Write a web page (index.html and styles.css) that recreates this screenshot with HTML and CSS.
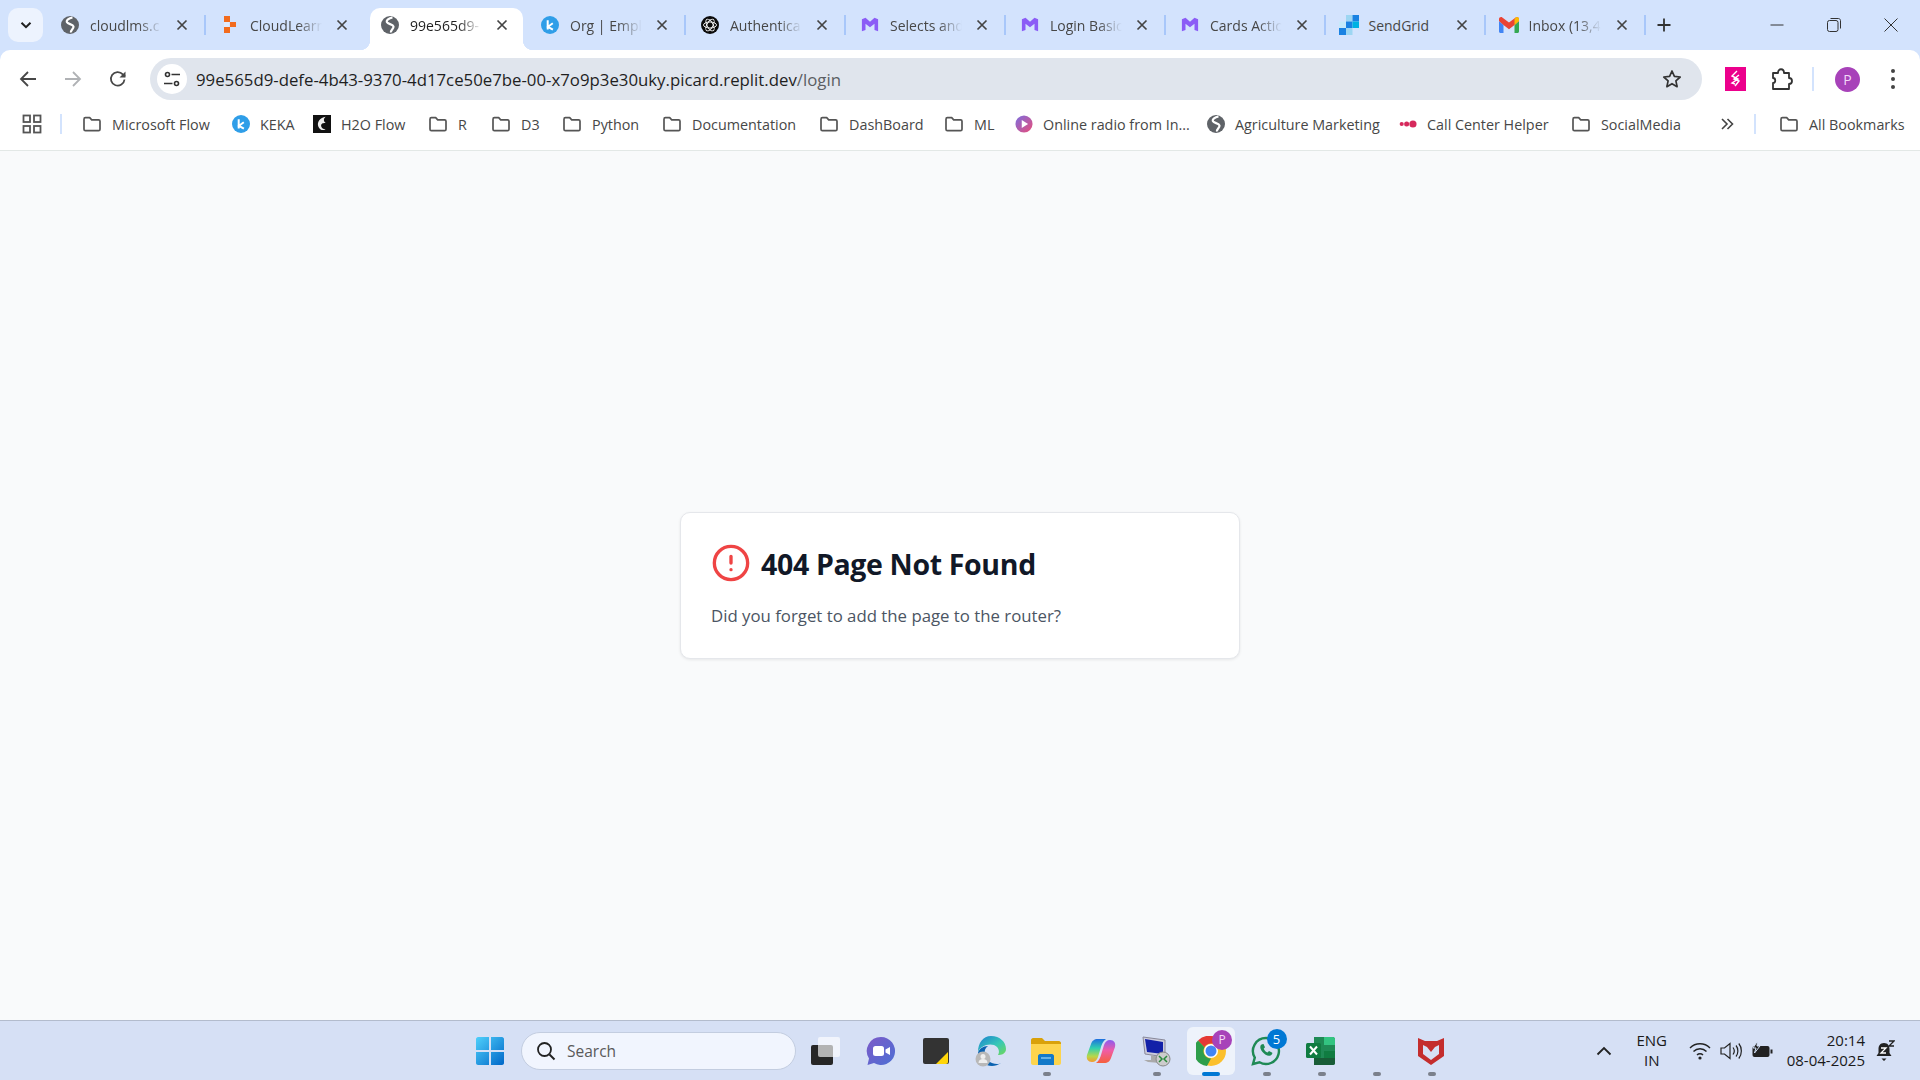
FILE: index.html
```html
<!DOCTYPE html>
<html lang="en">
<head>
  <meta charset="UTF-8">
  <title>404 Page Not Found</title>
  <link rel="stylesheet" href="styles.css">
</head>
<body>

<svg class="sprites" width="0" height="0">
  <symbol id="globe" viewBox="0 0 18 18">
    <circle cx="9" cy="9" r="9" fill="#5f6368"/>
    <path d="M11.500 1.500C8 2.200 5 4 6 6.300c1 2 6 1.700 6.500 4.200.4 2.300-3 3.300-2.500 6" fill="none" stroke="#fff" stroke-width="2.200"/>
  </symbol>
  <symbol id="folder" viewBox="0 0 20 20">
    <path d="M2 5.200c0-.9.6-1.500 1.400-1.500h4.300l2 2.100h6.900c.8 0 1.400.6 1.400 1.400v8c0 .8-.6 1.400-1.400 1.400H3.400c-.8 0-1.400-.6-1.400-1.400z" fill="none" stroke="#555" stroke-width="1.700" stroke-linejoin="round"/>
  </symbol>
  <symbol id="keka" viewBox="0 0 18 18">
    <circle cx="9" cy="9" r="9" fill="#2f9ee8"/>
    <path d="M6.700 4.200v9.300M11.800 7.200 6.900 10.800l5 2.800" fill="none" stroke="#fff" stroke-width="2"/>
  </symbol>
  <symbol id="mui" viewBox="0 0 20 18">
    <path d="M1 2.500 5 1l5 4.500L15 1l4 1.500V16l-4-1.500V7.500l-5 4-5-4v7L1 16z" fill="#8b5cf6"/>
  </symbol>
  <symbol id="close" viewBox="0 0 12 12">
    <path d="M1.500 1.500l9 9M10.500 1.500l-9 9" fill="none" stroke="#444" stroke-width="1.700"/>
  </symbol>
</svg>

<header class="browser">
  <div class="tabstrip">
    <div class="tab-search">
      <svg width="14" height="14" viewBox="0 0 14 14"><path d="M2.500 4.700 7 9.200l4.500-4.500" fill="none" stroke="#1f1f1f" stroke-width="2"/></svg>
    </div>
    <div class="tab">
      <svg class="favicon"><use href="#globe"/></svg>
      <span class="tab-title">cloudlms.c</span>
      <svg class="tab-close"><use href="#close"/></svg>
    </div>
    <i class="tab-sep"></i>
    <div class="tab">
      <svg class="favicon" viewBox="0 0 18 18"><path d="M3 0h6v6H3zM9 6h6v5H9zM3 11h6v6H3z" fill="#f26b1d"/><path d="M3 6h5v5H3z" fill="#fff" opacity=".3"/></svg>
      <span class="tab-title">CloudLearn</span>
      <svg class="tab-close"><use href="#close"/></svg>
    </div>
    <i class="tab-sep hidden"></i>
    <div class="tab active">
      <svg class="favicon"><use href="#globe"/></svg>
      <span class="tab-title">99e565d9-</span>
      <svg class="tab-close"><use href="#close"/></svg>
    </div>
    <i class="tab-sep hidden"></i>
    <div class="tab">
      <svg class="favicon"><use href="#keka"/></svg>
      <span class="tab-title">Org | Empl</span>
      <svg class="tab-close"><use href="#close"/></svg>
    </div>
    <i class="tab-sep"></i>
    <div class="tab">
      <svg class="favicon" viewBox="0 0 18 18">
        <circle cx="9" cy="9" r="9" fill="#0b0b0b"/>
        <g fill="none" stroke="#fff" stroke-width=".9">
          <ellipse cx="9" cy="9" rx="6.500" ry="3"/>
          <ellipse cx="9" cy="9" rx="6.500" ry="3" transform="rotate(60 9 9)"/>
          <ellipse cx="9" cy="9" rx="6.500" ry="3" transform="rotate(120 9 9)"/>
        </g>
      </svg>
      <span class="tab-title">Authentica</span>
      <svg class="tab-close"><use href="#close"/></svg>
    </div>
    <i class="tab-sep"></i>
    <div class="tab">
      <svg class="favicon"><use href="#mui"/></svg>
      <span class="tab-title">Selects and</span>
      <svg class="tab-close"><use href="#close"/></svg>
    </div>
    <i class="tab-sep"></i>
    <div class="tab">
      <svg class="favicon"><use href="#mui"/></svg>
      <span class="tab-title">Login Basic</span>
      <svg class="tab-close"><use href="#close"/></svg>
    </div>
    <i class="tab-sep"></i>
    <div class="tab">
      <svg class="favicon"><use href="#mui"/></svg>
      <span class="tab-title">Cards Actic</span>
      <svg class="tab-close"><use href="#close"/></svg>
    </div>
    <i class="tab-sep"></i>
    <div class="tab">
      <svg class="favicon favicon-wide" viewBox="0 0 20 20">
        <path d="M7 0h6.500v6.500H7z" fill="#9dd6f2"/><path d="M13.500 0H20v6.500h-6.500z" fill="#1a82e2"/>
        <path d="M7 6.500h6.500V13H7z" fill="#1a82e2"/><path d="M13.500 6.500H20V13h-6.500z" fill="#00b2e3"/>
        <path d="M0 6.500h7V13H0z" fill="#c6eafa"/><path d="M0 13h7v7H0z" fill="#1a82e2"/><path d="M7 13h6.500v7H7z" fill="#9dd6f2"/>
      </svg>
      <span class="tab-title plain">SendGrid</span>
      <svg class="tab-close"><use href="#close"/></svg>
    </div>
    <i class="tab-sep"></i>
    <div class="tab">
      <svg class="favicon favicon-wide" viewBox="0 0 20 16">
        <path d="M0 4v10.500C0 15.300.7 16 1.500 16H4.500V8z" fill="#4285f4"/>
        <path d="M15.500 8v8h3c.8 0 1.500-.7 1.500-1.500V4z" fill="#34a853"/>
        <path d="M4.500 8 0 4V2C0 .3 2-.6 3.300.4L10 5.500 16.700.4C18-.6 20 .3 20 2v2l-4.500 4L10 12.200z" fill="#ea4335"/>
        <path d="M15.500 8V1.900l1.200-1.500C18-.6 20 .3 20 2v2z" fill="#fbbc04"/>
      </svg>
      <span class="tab-title">Inbox (13,4</span>
      <svg class="tab-close"><use href="#close"/></svg>
    </div>
    <i class="tab-sep"></i>
    <svg class="new-tab" width="16" height="16" viewBox="0 0 16 16"><path d="M8 1.500v13M1.500 8h13" stroke="#333" stroke-width="1.800"/></svg>
    <div class="window-controls">
      <svg width="14" height="14" viewBox="0 0 14 14"><path d="M.5 7h13" stroke="#333" stroke-width="1"/></svg>
      <svg width="14" height="14" viewBox="0 0 14 14"><rect x=".5" y="2.500" width="10.500" height="11" rx="2" fill="none" stroke="#333"/><path d="M3.500.5h8c1 0 2 1 2 2v8" fill="none" stroke="#333"/></svg>
      <svg width="14" height="14" viewBox="0 0 14 14"><path d="M.5.500l13 13M13.500.5l-13 13" stroke="#333" stroke-width="1"/></svg>
    </div>
  </div>

  <div class="toolbar">
    <svg class="nav-btn" viewBox="0 0 20 20"><path d="M18 10H3M10 3l-7 7 7 7" fill="none" stroke="#474747" stroke-width="1.800"/></svg>
    <svg class="nav-btn" viewBox="0 0 20 20"><path d="M2 10h15M10 3l7 7-7 7" fill="none" stroke="#b0b2b5" stroke-width="1.800"/></svg>
    <svg class="nav-btn" viewBox="0 0 20 20"><path d="M16.500 10.500a6.800 6.800 0 1 1-1.700-5.200L17 7.500" fill="none" stroke="#474747" stroke-width="1.800"/><path d="M17.500 2.500v6h-6z" fill="#474747"/></svg>
    <div class="omnibox">
      <span class="site-info">
        <svg width="18" height="18" viewBox="0 0 18 18"><g fill="none" stroke="#333" stroke-width="1.600"><circle cx="4.500" cy="4.500" r="2"/><path d="M8.500 4.500H17M1 13.500h8.500"/><circle cx="13.500" cy="13.500" r="2"/></g></svg>
      </span>
      <span class="url">99e565d9-defe-4b43-9370-4d17ce50e7be-00-x7o9p3e30uky.picard.replit.dev<span class="url-path">/login</span></span>
      <svg class="star" width="20" height="20" viewBox="0 0 20 20"><path d="M10 2l2.400 5.400 5.800.6-4.300 3.900 1.200 5.800L10 14.700l-5.100 3 1.200-5.800L1.800 8l5.800-.6z" fill="none" stroke="#333" stroke-width="1.700" stroke-linejoin="round"/></svg>
    </div>
    <div class="toolbar-right">
      <svg class="ext" width="21" height="24" viewBox="0 0 21 24"><rect width="21" height="24" fill="#ec008c"/><path d="M12 4 7 9l6 3-6 4 3 1M14 8l-5 4 5 2-4 5" fill="none" stroke="#fff" stroke-width="1.400"/></svg>
      <svg class="puzzle" width="22" height="24" viewBox="0 0 22 24"><path d="M2 6h5c0-5 6-5 6 0h5v5c4 0 4 6 0 6v5H2v-6c3 0 3-5 0-5z" fill="none" stroke="#333" stroke-width="1.800" stroke-linejoin="round"/></svg>
      <i class="toolbar-sep"></i>
      <span class="avatar">P</span>
      <svg class="menu" width="6" height="22" viewBox="0 0 6 22"><circle cx="3" cy="3" r="2" fill="#444"/><circle cx="3" cy="11" r="2" fill="#444"/><circle cx="3" cy="19" r="2" fill="#444"/></svg>
    </div>
  </div>

  <nav class="bookmarks">
    <svg class="apps" width="20" height="20" viewBox="0 0 20 20"><g fill="none" stroke="#555" stroke-width="1.800"><rect x="1.500" y="1.500" width="6.500" height="6.500"/><rect x="12" y="1.500" width="6.500" height="6.500"/><rect x="1.500" y="12" width="6.500" height="6.500"/><rect x="12" y="12" width="6.500" height="6.500"/></g></svg>
    <i class="bookmark-sep"></i>
    <div class="bookmark-list">
      <a class="bookmark"><svg class="bm-icon"><use href="#folder"/></svg>Microsoft Flow</a>
      <a class="bookmark"><svg class="bm-icon small"><use href="#keka"/></svg>KEKA</a>
      <a class="bookmark"><svg class="bm-icon small" viewBox="0 0 20 20"><rect width="20" height="20" fill="#111"/><path d="M14 2C8 3 4 8 6 13c1 3 5 5 8 3-3 0-5-2-5-4 0-3 3-3 5-3-2-2-3-4 0-7z" fill="#eee"/></svg>H2O Flow</a>
      <a class="bookmark"><svg class="bm-icon"><use href="#folder"/></svg>R</a>
      <a class="bookmark"><svg class="bm-icon"><use href="#folder"/></svg>D3</a>
      <a class="bookmark"><svg class="bm-icon"><use href="#folder"/></svg>Python</a>
      <a class="bookmark"><svg class="bm-icon"><use href="#folder"/></svg>Documentation</a>
      <a class="bookmark"><svg class="bm-icon"><use href="#folder"/></svg>DashBoard</a>
      <a class="bookmark"><svg class="bm-icon"><use href="#folder"/></svg>ML</a>
      <a class="bookmark"><svg class="bm-icon small" viewBox="0 0 20 20"><defs><linearGradient id="radio" x1="0" y1="0" x2="1" y2="1"><stop offset="0" stop-color="#7a6ee0"/><stop offset="1" stop-color="#ea4c78"/></linearGradient></defs><circle cx="10" cy="10" r="9.500" fill="url(#radio)"/><path d="M7.500 5.500v9l7-4.500z" fill="#fff"/></svg>Online radio from In...</a>
      <a class="bookmark"><svg class="bm-icon small"><use href="#globe"/></svg>Agriculture Marketing</a>
      <a class="bookmark"><svg class="bm-icon small" viewBox="0 0 20 20"><circle cx="3" cy="10" r="2.300" fill="#d6295c"/><circle cx="8.500" cy="10" r="2.800" fill="#d6295c"/><circle cx="15.500" cy="10" r="4" fill="#d6295c"/></svg>Call Center Helper</a>
      <a class="bookmark"><svg class="bm-icon"><use href="#folder"/></svg>SocialMedia</a>
      <svg class="bm-more" width="14" height="12" viewBox="0 0 14 12"><path d="M2 1l5 5-5 5M7.500 1l5 5-5 5" fill="none" stroke="#444" stroke-width="1.600"/></svg>
      <i class="bookmark-sep"></i>
      <a class="bookmark"><svg class="bm-icon"><use href="#folder"/></svg>All Bookmarks</a>
    </div>
  </nav>
</header>

<main class="page">
  <div class="card">
    <div class="card-head">
      <svg width="40" height="40" viewBox="0 0 24 24" fill="none" stroke="#ef4444" stroke-width="2" stroke-linecap="round" stroke-linejoin="round"><circle cx="12" cy="12" r="10"/><path d="M12 8v4M12 16h.01"/></svg>
      <h1>404 Page Not Found</h1>
    </div>
    <p>Did you forget to add the page to the router?</p>
  </div>
</main>

<footer class="taskbar">
  <div class="task-tile">
    <svg width="30" height="30" viewBox="0 0 30 30"><defs><linearGradient id="win" x1="0" y1="0" x2="1" y2="1"><stop offset="0" stop-color="#4fd0fb"/><stop offset="1" stop-color="#0067c8"/></linearGradient></defs><path d="M1 3c0-1 1-2 2-2h11v13H1zM16 1h11c1 0 2 1 2 2v11H16zM1 16h13v13H3c-1 0-2-1-2-2zM16 16h13v11c0 1-1 2-2 2H16z" fill="url(#win)"/></svg>
  </div>
  <div class="search-pill">
    <svg width="20" height="20" viewBox="0 0 20 20"><circle cx="8.500" cy="8.500" r="6.500" fill="none" stroke="#222" stroke-width="1.800"/><path d="M13.500 13.500l5 5" stroke="#222" stroke-width="2"/></svg>
    <span>Search</span>
  </div>
  <div class="task-tile">
    <svg width="32" height="30" viewBox="0 0 32 30"><rect x="1" y="9" width="22" height="20" rx="2" fill="#262626"/><rect x="8" y="1" width="22" height="20" rx="2" fill="#fff" opacity=".65"/></svg>
  </div>
  <div class="task-tile">
    <svg width="30" height="30" viewBox="0 0 30 30"><defs><linearGradient id="meet" x1="0" y1="0" x2="1" y2="1"><stop offset="0" stop-color="#7d5ac8"/><stop offset="1" stop-color="#4c6fd4"/></linearGradient></defs><path d="M15 1a14 14 0 1 1-7 26.100L1.500 29 3 22.500A14 14 0 0 1 15 1z" fill="url(#meet)"/><rect x="7" y="10" width="11" height="10" rx="2.500" fill="#fff"/><path d="M19.500 13.500 24 11v8l-4.500-2.500z" fill="#fff"/></svg>
  </div>
  <div class="task-tile">
    <svg width="26" height="26" viewBox="0 0 26 26"><rect width="26" height="26" rx="2" fill="#333"/><path d="M13 26 25 14v10c0 1-1 2-2 2z" fill="#ffd60a"/></svg>
  </div>
  <div class="task-tile">
    <svg width="32" height="32" viewBox="0 0 32 32"><defs><linearGradient id="edge" x1="0" y1="0" x2="1" y2="1"><stop offset="0" stop-color="#1b7fd0"/><stop offset=".55" stop-color="#36c7b8"/><stop offset="1" stop-color="#6fd85a"/></linearGradient></defs><path d="M16 1c9 0 15 6 15 13 0 5-5 6-8 6 2-3 1-8-4-10-7-2-14 2-16 7C3 8 8 1 16 1z" fill="url(#edge)"/><path d="M3 18c1-4 5-7 10-7-3 2-4 5-3 8 1 6 6 10 12 10 2 0 3-.5 4-1-3 2-6 3-9 3C10 31 3 26 3 18z" fill="#0b62b0"/><circle cx="8" cy="24" r="7.500" fill="#b8b8b8"/><circle cx="8" cy="21.500" r="2.500" fill="#eee"/><path d="M3.500 28c0-3 2-4 4.500-4s4.500 1 4.500 4z" fill="#eee"/></svg>
  </div>
  <div class="task-tile">
    <svg width="30" height="28" viewBox="0 0 30 28"><path d="M0 3c0-1 1-2 2-2h9l3 3h14c1 0 2 1 2 2v3H0z" fill="#d9a10a"/><path d="M0 7h30v19c0 1-1 2-2 2H2c-1 0-2-1-2-2z" fill="#fdd44d"/><path d="M7 19c0-1 1-2 2-2h12c1 0 2 1 2 2v9H7z" fill="#1279c9"/><path d="M10 21h10" stroke="#7fc4f0" stroke-width="1.500"/></svg>
    <i class="running"></i>
  </div>
  <div class="task-tile">
    <svg width="30" height="30" viewBox="0 0 30 30"><defs><linearGradient id="cop1" x1="0" y1="0" x2="0" y2="1"><stop offset="0" stop-color="#1e6fe0"/><stop offset=".4" stop-color="#2fd0b0"/><stop offset=".75" stop-color="#b6d84a"/><stop offset="1" stop-color="#f59a2e"/></linearGradient><linearGradient id="cop2" x1="0" y1="0" x2="0" y2="1"><stop offset="0" stop-color="#8a5cf0"/><stop offset=".45" stop-color="#ef5da8"/><stop offset="1" stop-color="#f6603c"/></linearGradient></defs><path d="M20 3H12C8 3 6 5 5 8L1 19c-1 4 1 7 5 7 3 0 5-2 6-5l3-10c.5-2 2-6 5-8z" fill="url(#cop1)"/><path d="M10 27h8c4 0 6-2 7-5l4-11c1-4-1-7-5-7-3 0-5 2-6 5l-3 10c-.5 2-2 6-5 8z" fill="url(#cop2)"/></svg>
  </div>
  <div class="task-tile">
    <svg width="32" height="32" viewBox="0 0 32 32"><path d="M3 2l22 3v17L5 19z" fill="#ccd" stroke="#889" stroke-width="1"/><path d="M5 4l18 3v12L7 17z" fill="#1220a8"/><path d="M5 19l6 1v5H4l4 2 12 1v-6z" fill="#aaa"/><circle cx="23" cy="24" r="7" fill="#ccc" stroke="#888"/><path d="M19 21l3 3-3 3M27 21l-3 3 3 3" fill="none" stroke="#2a8a3c" stroke-width="1.500"/></svg>
    <i class="running"></i>
  </div>
  <div class="task-tile active">
    <svg class="chrome" width="30" height="30" viewBox="0 0 30 30">
      <circle cx="15" cy="15" r="15" fill="#fbc02d"/>
      <path d="M15 0a15 15 0 0 1 13 7.500H15a7.500 7.500 0 0 0-6.500 3.750L2 4.500A15 15 0 0 1 15 0z" fill="#e53935"/>
      <path d="M2 4.500l6.500 6.750A7.500 7.500 0 0 0 15 22.500L11 30A15 15 0 0 1 2 4.500z" fill="#2e9e4a"/>
      <circle cx="15" cy="15" r="7" fill="#fff"/><circle cx="15" cy="15" r="5.500" fill="#4285f4"/>
    </svg>
    <span class="chrome-badge">P</span>
    <i class="running current"></i>
  </div>
  <div class="task-tile">
    <svg width="32" height="32" viewBox="0 0 32 32"><path d="M16 3a13 13 0 1 1-6.500 24.300L3 29l1.800-6.300A13 13 0 0 1 16 3z" fill="none" stroke="#1f8a55" stroke-width="2.400"/><path d="M11.500 9.500c-2 1.500-1.500 4.500 1 7.500s5.500 4.500 8 3.500c1.500-.6 2-2 1.800-2.800l-3.300-1.700-1.500 1.500c-1.500-.5-3-2-3.800-3.800l1.300-1.400-1.500-3.200c-.6-.2-1.400.1-2 .4z" fill="#1f8a55"/></svg>
    <span class="count-badge">5</span>
    <i class="running"></i>
  </div>
  <div class="task-tile">
    <svg width="30" height="28" viewBox="0 0 30 28"><path d="M8 0h19c1 0 2 1 2 2v24c0 1-1 2-2 2H8z" fill="#1f8a55"/><path d="M18 0h9c1 0 2 1 2 2v6H18z" fill="#33c481"/><path d="M18 14h11v7H18z" fill="#107c41"/><path d="M8 21h21v5c0 1-1 2-2 2H8z" fill="#185c37"/><rect y="6" width="15" height="15" rx="1.500" fill="#107c41"/><path d="M4 9.500l7 8M11 9.500l-7 8" stroke="#fff" stroke-width="2"/></svg>
    <i class="running"></i>
  </div>
  <div class="task-tile"><i class="running"></i></div>
  <div class="task-tile">
    <svg width="28" height="30" viewBox="0 0 28 30"><path d="M1 2l7 3h12l7-3v18l-13 9-13-9zM6 9v9l8 6 8-6V9l-4 2-4 5-4-5z" fill="#c42d2d" fill-rule="evenodd"/></svg>
    <i class="running"></i>
  </div>

  <div class="tray">
    <svg class="tray-chevron" width="16" height="10" viewBox="0 0 16 10"><path d="M1.500 8.500 8 2l6.500 6.500" fill="none" stroke="#222" stroke-width="1.800"/></svg>
    <div class="tray-lang">ENG<br>IN</div>
    <svg class="tray-icon" width="22" height="20" viewBox="0 0 22 20"><g fill="none" stroke="#222" stroke-width="1.400"><path d="M1 7a14 14 0 0 1 20 0M4.500 10.500a9 9 0 0 1 13 0M8 14a4.200 4.200 0 0 1 6 0"/></g><circle cx="11" cy="17" r="1.600" fill="#222"/></svg>
    <svg class="tray-icon" width="22" height="20" viewBox="0 0 22 20"><g fill="none" stroke="#222" stroke-width="1.200"><path d="M1 7h3.500L10 2.500v15L4.500 13H1z"/><path d="M13 6.500c1.500 2 1.500 5 0 7M16 4.500c2.500 3 2.500 8 0 11M18.800 2.500c3.400 4 3.400 11 0 15"/></g></svg>
    <svg class="tray-icon" width="22" height="20" viewBox="0 0 22 20"><rect x="1.500" y="5" width="17" height="11" rx="2" fill="#222"/><path d="M19.500 8.500h2v4h-2z" fill="#222"/><path d="M6.500 0 2 7h3l-1.500 5L9 5H6z" fill="#222" stroke="#d4e1f7"/></svg>
    <div class="tray-clock">20:14<br>08-04-2025</div>
    <svg class="tray-bell" width="20" height="22" viewBox="0 0 20 22"><path d="M9 3C5 3 3.500 6 3.500 9v4L1.500 16h15l-2-3V9C14.500 6 13 3 9 3zM6.500 18.500h5L9 21z" fill="#222"/><path d="M6 8h5l-5 5h5" fill="none" stroke="#fff" stroke-width="1.300"/><path d="M14 1h5l-5 5h5" fill="none" stroke="#222" stroke-width="1.300"/></svg>
  </div>
</footer>

</body>
</html>
```

FILE: styles.css
```css
html, body { height: 100%; }
body { margin: 0; display: flex; flex-direction: column; height: 100vh; overflow: hidden; background: #f9fafb; font-family: "Open Sans", "Noto Sans", sans-serif; }
.sprites { display: block; height: 0; }
i { display: block; }

/* browser chrome */
.browser { flex: none; background: #d3e3fd; }
.tabstrip { display: flex; align-items: center; height: 50px; }
.tab-search { flex: none; display: flex; align-items: center; justify-content: center; width: 35px; height: 34px; margin: 0 3px 0 8px; background: #edf3fe; border-radius: 10px; }
.tab { position: relative; flex: none; display: flex; align-items: center; width: 158px; height: 50px; padding: 0 14px 0 15px; box-sizing: border-box; }
.tab.active::before { content: ""; position: absolute; left: 4px; right: 1px; top: 8px; bottom: 0; background: #fff; border-radius: 10px 10px 0 0; }
.tab.active::after { content: ""; position: absolute; left: -6px; right: -9px; bottom: 0; height: 10px; background: radial-gradient(circle at 0 0, transparent 10px, #fff 10.500px) left / 10px 10px no-repeat, radial-gradient(circle at 100% 0, transparent 10px, #fff 10.500px) right / 10px 10px no-repeat; }
.tab.active > * { position: relative; z-index: 1; }
.favicon { flex: none; width: 18px; height: 18px; margin-right: 11px; }
.favicon-wide { width: 20px; height: 20px; margin-left: -2.500px; margin-right: 10px; }
.tab-title { flex: 1; min-width: 0; white-space: nowrap; font-size: 14px; color: #474747; -webkit-mask-image: linear-gradient(to right, #000 48px, transparent 72px); mask-image: linear-gradient(to right, #000 48px, transparent 72px); }
.tab-title.plain { -webkit-mask-image: none; mask-image: none; }
.tab.active .tab-title { color: #1f1f1f; }
.tab-close { flex: none; width: 12px; height: 12px; margin: 0 2px; }
.tab-sep { flex: none; width: 2px; height: 20px; background: #a8c7fa; }
.tab-sep.hidden { background: none; }
.new-tab { flex: none; margin-left: 10px; }
.window-controls { display: flex; align-items: center; gap: 43px; margin-left: auto; margin-right: 22px; }

.toolbar { display: flex; align-items: center; height: 50px; background: #fff; border-radius: 10px 10px 0 0; padding-top: 8px; box-sizing: border-box; }
.nav-btn { flex: none; width: 20px; height: 20px; margin-left: 25px; }
.nav-btn:first-child { margin-left: 18px; }
.omnibox { flex: none; display: flex; align-items: center; width: 1552px; height: 42px; margin-left: 22px; background: #e0e5ed; border-radius: 21px; box-sizing: border-box; padding: 0 20px 0 7px; }
.site-info { flex: none; display: flex; align-items: center; justify-content: center; width: 30px; height: 30px; background: #fff; border-radius: 50%; }
.url { flex: 1; margin-left: 9px; font-size: 16.800px; color: #1f1f1f; white-space: nowrap; }
.url-path { color: #5b5e63; }
.toolbar-right { display: flex; align-items: center; margin-left: 23px; }
.puzzle { margin-left: 25px; }
.toolbar-sep { width: 2px; height: 24px; margin-left: 19px; background: #d3e3fd; }
.avatar { width: 25px; height: 25px; margin-left: 21px; border-radius: 50%; background: #a742b9; color: #f3d9f7; font-size: 14px; line-height: 25px; text-align: center; }
.menu { margin-left: 30px; }

.bookmarks { display: flex; align-items: center; height: 51px; padding-bottom: 2px; background: #fff; border-bottom: 1px solid #e3e8e6; box-sizing: border-box; }
.apps { flex: none; margin-left: 22px; }
.bookmarks > .bookmark-sep { margin-left: 18px; }
.bookmark-sep { width: 2px; height: 20px; background: #d3e3fd; }
.bookmark-list { display: grid; grid-template-columns: 150px 81px 115px 63px 71px 100px 157px 125px 71px 192px 192px 172px 149px 34px 25px auto; align-items: center; margin-left: 20px; }
.bookmark { display: flex; align-items: center; gap: 10px; font-size: 14.350px; color: #474747; white-space: nowrap; }
.bm-icon { flex: none; width: 20px; height: 20px; }
.bm-icon.small { width: 18px; height: 18px; }

/* page content */
.page { flex: 1; display: flex; align-items: center; justify-content: center; }
.card { width: 560px; padding: 30px; box-sizing: border-box; background: #fff; border: 1px solid #e5e7eb; border-radius: 10px; box-shadow: 0 1px 3px rgba(0,0,0,0.08); }
.card-head { display: flex; align-items: center; gap: 10px; height: 40px; }
.card-head h1 { margin: 1px 0 0; font-size: 28.500px; letter-spacing: -0.35px; line-height: 40px; font-weight: 700; color: #111827; }
.card p { margin: 20px 0 0; font-size: 16.800px; line-height: 25px; color: #4b5563; }

/* windows taskbar */
.taskbar { flex: none; display: flex; align-items: center; height: 60px; padding-left: 462px; box-sizing: border-box; background: #d6e0f5; border-top: 1px solid #b3bccd; }
.task-tile { position: relative; flex: none; display: flex; align-items: center; justify-content: center; width: 55px; height: 48px; box-sizing: border-box; }
.running { position: absolute; left: 24px; bottom: -1px; width: 8px; height: 4px; border-radius: 2px; background: #7b808b; }
.running.current { left: 15px; width: 18px; background: #0078d4; }
.task-tile.active { width: 48px; margin: 0 3.500px; background: #eef3fb; border-radius: 6px; }
.chrome-badge { position: absolute; top: 3px; right: 3px; width: 20px; height: 20px; border-radius: 50%; background: #a742b9; color: #f3d9f7; font-size: 12px; line-height: 20px; text-align: center; }
.count-badge { position: absolute; top: 2px; right: 7px; width: 20px; height: 20px; border-radius: 50%; background: #0078d4; color: #fff; font-size: 13px; line-height: 20px; text-align: center; }
.search-pill { flex: none; display: flex; align-items: center; gap: 11px; width: 275px; height: 38px; margin: 0 2.500px 0 4px; padding-left: 14px; box-sizing: border-box; background: #f1f5fe; border: 1px solid #c3cde0; border-radius: 19px; font-size: 15.500px; color: #5a5a5a; }
.tray { display: flex; align-items: center; margin-left: auto; height: 100%; color: #1a1a1a; font-size: 15px; line-height: 19.500px; }
.tray-lang { width: 40px; margin-left: 20px; text-align: center; }
.tray-chevron { flex: none; }
.tray-icon { flex: none; margin-left: 9px; }
.tray-lang + .tray-icon { margin-left: 17px; }
.tray-clock { margin-left: 14px; text-align: right; }
.tray-bell { flex: none; margin: 0 25px 0 10px; }
```
